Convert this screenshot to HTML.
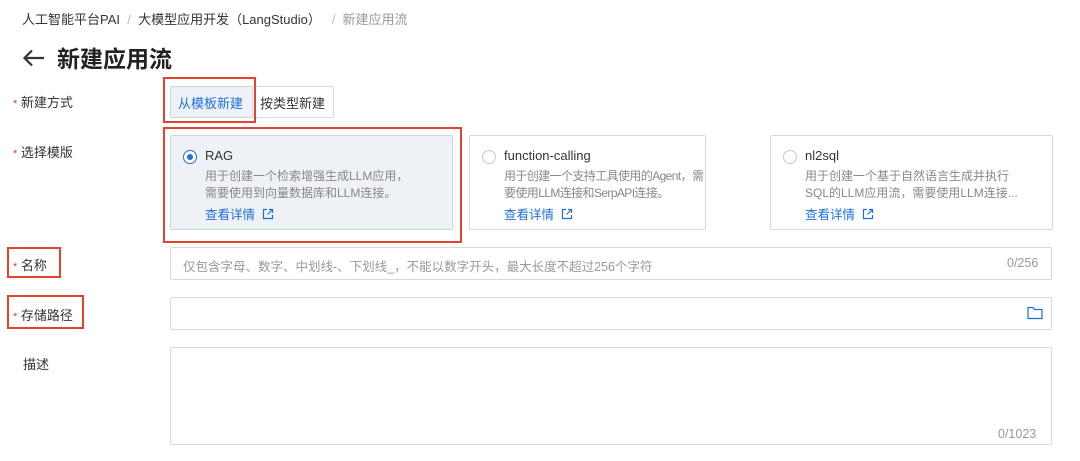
<!DOCTYPE html>
<html><head><meta charset="utf-8"><style>
*{margin:0;padding:0;box-sizing:border-box}
body{width:1080px;height:461px;background:#fff;font-family:"Liberation Sans","Noto Sans CJK SC",sans-serif;position:relative;overflow:hidden;color:#333}
.a{position:absolute;white-space:nowrap}
.lbl{font-size:13px;color:#333}
.star{color:#e4393c;font-size:11px}
.box{position:absolute;border:1px solid #d9d9d9;border-radius:2px;background:#fff}
.red{position:absolute;border:2px solid #e5432e}
.card .t{position:absolute;left:34px;top:12px;font-size:13px;color:#333}
.card .d{position:absolute;left:34px;top:32px;font-size:12px;color:#888;line-height:17px;white-space:nowrap}
.card .l{position:absolute;left:34px;top:68px;font-size:12.5px;color:#1f6fd9}
.radio{position:absolute;left:12px;top:14px;width:14px;height:14px;border:1px solid #c8c8c8;border-radius:50%;background:#fff}
</style></head><body>
<div class="a" style="left:22px;top:9px;font-size:13px;color:#333">人工智能平台PAI <span style="color:#bbb">&nbsp;/&nbsp;</span> 大模型应用开发（LangStudio） <span style="color:#bbb">&nbsp;&nbsp;/&nbsp;</span> <span style="color:#999">新建应用流</span></div>
<svg class="a" style="left:22px;top:48px" width="24" height="20" viewBox="0 0 24 20"><path d="M22 10H3M10 2.5L2.5 10L10 17.5" stroke="#333" stroke-width="2.2" fill="none"/></svg>
<div class="a" style="left:57px;top:40px;font-size:23px;font-weight:bold;color:#222">新建应用流</div>

<div class="a lbl" style="left:13px;top:92px"><span class="star">*</span> 新建方式</div>
<div class="box" style="left:170px;top:86px;width:83px;height:32px;background:#eef1f6;border-color:#ccd3de"></div>
<div class="a" style="left:178px;top:93px;font-size:13px;color:#1f6fd9">从模板新建</div>
<div class="box" style="left:252px;top:86px;width:82px;height:32px"></div>
<div class="a" style="left:260px;top:93px;font-size:13px;color:#333">按类型新建</div>
<div class="red" style="left:163px;top:77px;width:93px;height:46px"></div>

<div class="a lbl" style="left:13px;top:142px"><span class="star">*</span> 选择模版</div>
<div class="box card" style="left:170px;top:135px;width:283px;height:95px;background:#eef1f6;border-color:#cfd5de">
 <div class="radio" style="border:1.5px solid #1f6fd9"><div style="position:absolute;left:2.5px;top:2.5px;width:6px;height:6px;border-radius:50%;background:#1f6fd9"></div></div>
 <div class="t">RAG</div>
 <div class="d">用于创建一个检索增强生成LLM应用，<br>需要使用到向量数据库和LLM连接。</div>
 <div class="l">查看详情 &nbsp;<svg width="12" height="12" viewBox="0 0 12 12" style="vertical-align:-1px"><path d="M5 1.5H1.5V10.5H10.5V7M7 1.5H10.5V5M10.5 1.5L5.5 6.5" stroke="#1f6fd9" stroke-width="1.2" fill="none"/></svg></div>
</div>
<div class="red" style="left:163px;top:127px;width:299px;height:116px"></div>
<div class="box card" style="left:469px;top:135px;width:237px;height:95px">
 <div class="radio"></div>
 <div class="t">function-calling</div>
 <div class="d" style="letter-spacing:-0.6px">用于创建一个支持工具使用的Agent，需<br>要使用LLM连接和SerpAPI连接。</div>
 <div class="l">查看详情 &nbsp;<svg width="12" height="12" viewBox="0 0 12 12" style="vertical-align:-1px"><path d="M5 1.5H1.5V10.5H10.5V7M7 1.5H10.5V5M10.5 1.5L5.5 6.5" stroke="#1f6fd9" stroke-width="1.2" fill="none"/></svg></div>
</div>
<div class="box card" style="left:770px;top:135px;width:283px;height:95px">
 <div class="radio"></div>
 <div class="t">nl2sql</div>
 <div class="d">用于创建一个基于自然语言生成并执行<br>SQL的LLM应用流，需要使用LLM连接...</div>
 <div class="l">查看详情 &nbsp;<svg width="12" height="12" viewBox="0 0 12 12" style="vertical-align:-1px"><path d="M5 1.5H1.5V10.5H10.5V7M7 1.5H10.5V5M10.5 1.5L5.5 6.5" stroke="#1f6fd9" stroke-width="1.2" fill="none"/></svg></div>
</div>

<div class="a lbl" style="left:13px;top:255px"><span class="star">*</span> 名称</div>
<div class="red" style="left:7px;top:247px;width:54px;height:31px"></div>
<div class="box" style="left:170px;top:247px;width:882px;height:33px"></div>
<div class="a" style="left:183px;top:256px;font-size:12.5px;color:#999">仅包含字母、数字、中划线-、下划线_，不能以数字开头，最大长度不超过256个字符</div>
<div class="a" style="left:1007px;top:256px;font-size:12.5px;color:#999">0/256</div>

<div class="a lbl" style="left:13px;top:305px"><span class="star">*</span> 存储路径</div>
<div class="red" style="left:7px;top:295px;width:77px;height:34px"></div>
<div class="box" style="left:170px;top:297px;width:882px;height:33px"></div>
<svg class="a" style="left:1027px;top:306px" width="16" height="14" viewBox="0 0 16 14"><path d="M1 1.5H6L7.5 3.5H15V12.5H1Z" stroke="#1f6fd9" stroke-width="1.2" fill="none"/></svg>

<div class="a lbl" style="left:23px;top:354px">描述</div>
<div class="box" style="left:170px;top:347px;width:882px;height:98px"></div>
<div class="a" style="left:998px;top:427px;font-size:12.5px;color:#999">0/1023</div>
</body></html>
